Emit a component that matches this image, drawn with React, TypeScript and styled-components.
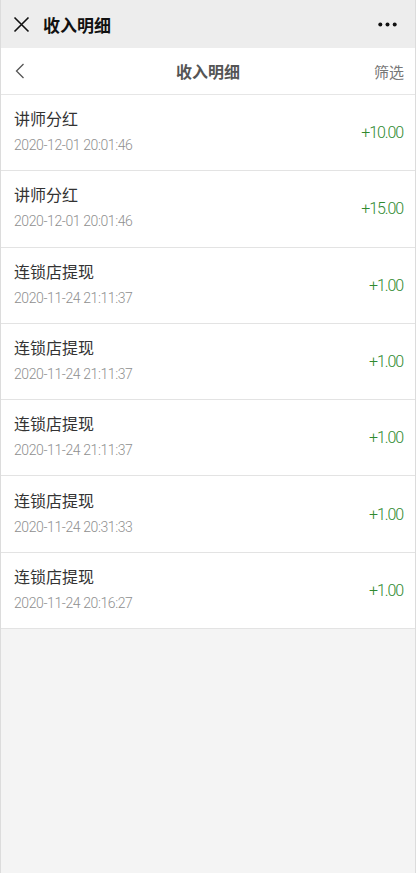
import React from 'react';
import styled, { createGlobalStyle } from 'styled-components';

const GlobalStyle = createGlobalStyle`
  html, body {
    margin: 0;
    padding: 0;
    background: #f4f4f4;
  }
  body {
    font-family: "Noto Sans CJK SC", "Noto Sans", sans-serif;
  }
`;

interface Income {
  title: string;
  time: string;
  amount: string;
}

const records: Income[] = [
  { title: '讲师分红', time: '2020-12-01 20:01:46', amount: '+10.00' },
  { title: '讲师分红', time: '2020-12-01 20:01:46', amount: '+15.00' },
  { title: '连锁店提现', time: '2020-11-24 21:11:37', amount: '+1.00' },
  { title: '连锁店提现', time: '2020-11-24 21:11:37', amount: '+1.00' },
  { title: '连锁店提现', time: '2020-11-24 21:11:37', amount: '+1.00' },
  { title: '连锁店提现', time: '2020-11-24 20:31:33', amount: '+1.00' },
  { title: '连锁店提现', time: '2020-11-24 20:16:27', amount: '+1.00' },
];

const Page = styled.div`
  min-height: 873px;
  box-sizing: border-box;
  background: #f4f4f4;
  border-left: 1px solid #dcdcdc;
  border-right: 1px solid #dcdcdc;
`;

const WeChatBar = styled.div`
  height: 48px;
  background: #ededed;
  display: flex;
  align-items: center;
  padding: 0 18px 0 12px;
  box-sizing: border-box;
`;

const WeChatTitle = styled.div`
  flex: 1;
  margin-left: 13px;
  font-size: 17px;
  font-weight: 700;
  color: #111;
  line-height: 1;
`;

const NavBar = styled.div`
  height: 47px;
  background: #fff;
  border-bottom: 1px solid #e6e6e6;
  display: flex;
  align-items: center;
  justify-content: space-between;
  padding: 0 11px 0 13px;
  box-sizing: border-box;
  position: relative;
`;

const NavTitle = styled.div`
  position: absolute;
  left: 0;
  right: 0;
  text-align: center;
  font-size: 16px;
  font-weight: 700;
  color: #555;
  pointer-events: none;
`;

const Filter = styled.div`
  font-size: 15px;
  color: #777;
`;

const List = styled.div`
  background: #fff;
`;

const Row = styled.div`
  height: 75.3px;
  border-bottom: 1px solid #e3e3e3;
  display: flex;
  align-items: center;
  justify-content: space-between;
  padding: 0 12px 0 13px;
`;

const Info = styled.div`
  display: flex;
  flex-direction: column;
  gap: 7px;
  margin-top: -2px;
`;

const Title = styled.div`
  font-size: 16px;
  color: #333;
  line-height: 21px;
`;

const Time = styled.div`
  font-family: "Roboto", "Noto Sans", sans-serif;
  font-weight: 300;
  font-size: 14px;
  color: #8f8f8f;
  line-height: 19px;
  letter-spacing: -0.4px;
`;

const Amount = styled.div`
  font-family: "Roboto", "Noto Sans", sans-serif;
  font-weight: 300;
  font-size: 16px;
  color: #2f8a2f;
  letter-spacing: -1.1px;
`;

const CloseIcon = () => (
  <svg width="17" height="17" viewBox="0 0 17 17">
    <path d="M1.5 1.5 L15.5 15.5 M15.5 1.5 L1.5 15.5" stroke="#111" strokeWidth="1.6" fill="none" />
  </svg>
);

const MoreIcon = () => (
  <svg width="19" height="5" viewBox="0 0 19 5">
    <circle cx="2.3" cy="2.5" r="2" fill="#111" />
    <circle cx="9.5" cy="2.5" r="2" fill="#111" />
    <circle cx="16.7" cy="2.5" r="2" fill="#111" />
  </svg>
);

const BackIcon = () => (
  <svg width="12" height="16" viewBox="0 0 12 16">
    <path d="M9.5 1 L2.5 8 L9.5 15" stroke="#555" strokeWidth="1.3" fill="none" />
  </svg>
);

export default function App() {
  return (
    <>
      <GlobalStyle />
      <Page>
        <WeChatBar>
          <CloseIcon />
          <WeChatTitle>收入明细</WeChatTitle>
          <MoreIcon />
        </WeChatBar>
        <NavBar>
          <BackIcon />
          <NavTitle>收入明细</NavTitle>
          <Filter>筛选</Filter>
        </NavBar>
        <List>
          {records.map((r, i) => (
            <Row key={i}>
              <Info>
                <Title>{r.title}</Title>
                <Time>{r.time}</Time>
              </Info>
              <Amount>{r.amount}</Amount>
            </Row>
          ))}
        </List>
      </Page>
    </>
  );
}
